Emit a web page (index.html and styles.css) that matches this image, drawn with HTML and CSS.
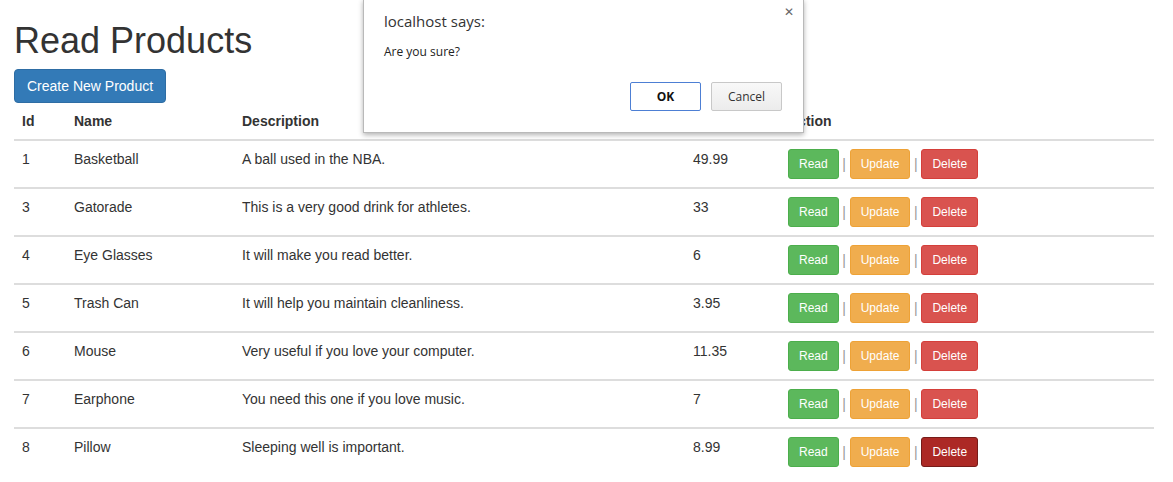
FILE: index.html
```html
<!DOCTYPE html>
<html>
<head>
<meta charset="utf-8">
<title>Read Products</title>
<link rel="stylesheet" href="styles.css">
</head>
<body>
<div class="container">
  <h1 class="title">Read Products</h1>
  <div class="toolbar"><a class="btn btn-primary">Create New Product</a></div>
  <table class="table">
    <colgroup>
      <col class="c-id"><col class="c-name"><col class="c-desc"><col class="c-price"><col class="c-action">
    </colgroup>
    <thead>
      <tr><th>Id</th><th>Name</th><th>Description</th><th>Price</th><th>Action</th></tr>
    </thead>
    <tbody>
      <tr><td>1</td><td>Basketball</td><td>A ball used in the NBA.</td><td>49.99</td><td class="actions"><a class="btn-sm green">Read</a><span class="sep">|</span><a class="btn-sm orange">Update</a><span class="sep">|</span><a class="btn-sm red">Delete</a></td></tr>
      <tr><td>3</td><td>Gatorade</td><td>This is a very good drink for athletes.</td><td>33</td><td class="actions"><a class="btn-sm green">Read</a><span class="sep">|</span><a class="btn-sm orange">Update</a><span class="sep">|</span><a class="btn-sm red">Delete</a></td></tr>
      <tr><td>4</td><td>Eye Glasses</td><td>It will make you read better.</td><td>6</td><td class="actions"><a class="btn-sm green">Read</a><span class="sep">|</span><a class="btn-sm orange">Update</a><span class="sep">|</span><a class="btn-sm red">Delete</a></td></tr>
      <tr><td>5</td><td>Trash Can</td><td>It will help you maintain cleanliness.</td><td>3.95</td><td class="actions"><a class="btn-sm green">Read</a><span class="sep">|</span><a class="btn-sm orange">Update</a><span class="sep">|</span><a class="btn-sm red">Delete</a></td></tr>
      <tr><td>6</td><td>Mouse</td><td>Very useful if you love your computer.</td><td>11.35</td><td class="actions"><a class="btn-sm green">Read</a><span class="sep">|</span><a class="btn-sm orange">Update</a><span class="sep">|</span><a class="btn-sm red">Delete</a></td></tr>
      <tr><td>7</td><td>Earphone</td><td>You need this one if you love music.</td><td>7</td><td class="actions"><a class="btn-sm green">Read</a><span class="sep">|</span><a class="btn-sm orange">Update</a><span class="sep">|</span><a class="btn-sm red">Delete</a></td></tr>
      <tr><td>8</td><td>Pillow</td><td>Sleeping well is important.</td><td>8.99</td><td class="actions"><a class="btn-sm green">Read</a><span class="sep">|</span><a class="btn-sm orange">Update</a><span class="sep">|</span><a class="btn-sm red active">Delete</a></td></tr>
    </tbody>
  </table>
</div>

<div class="dialog">
  <span class="close">&#x2715;</span>
  <div class="dlg-title">localhost says:</div>
  <div class="dlg-msg">Are you sure?</div>
  <div class="dlg-buttons">
    <button class="dlg-btn ok">OK</button>
    <button class="dlg-btn">Cancel</button>
  </div>
</div>
</body>
</html>
```

FILE: styles.css
```css
html, body {
  margin: 0;
  padding: 0;
  background: #fff;
}
body {
  font-family: "Liberation Sans", Arial, Helvetica, sans-serif;
  font-size: 14px;
  line-height: 20px;
  color: #333;
}
.container {
  padding: 0 19px 0 14px;
}
.title {
  font-size: 36px;
  font-weight: 500;
  line-height: 40px;
  margin: 21px 0 8px;
  color: #333;
}
.toolbar {
  height: 34px;
}
.btn {
  display: inline-block;
  box-sizing: border-box;
  height: 34px;
  padding: 6px 12px;
  font-size: 14px;
  line-height: 20px;
  border: 1px solid transparent;
  border-radius: 4px;
  cursor: pointer;
}
.btn-primary {
  background: #337ab7;
  border-color: #2e6da4;
  color: #fff;
}
.table {
  width: 1140px;
  border-collapse: collapse;
  table-layout: fixed;
}
.c-id { width: 52px; }
.c-name { width: 168px; }
.c-desc { width: 451px; }
.c-price { width: 95px; }
.c-action { width: 374px; }
.table th {
  text-align: left;
  font-weight: bold;
  padding: 8px;
  vertical-align: bottom;
  border-bottom: 2px solid #ddd;
}
.table td {
  padding: 8px 8px 8px;
  vertical-align: top;
  border-top: 2px solid #ddd;
  height: 30px;
}
.table thead + tbody tr:first-child td {
  border-top: 0;
}
.actions {
  white-space: nowrap;
}
.table td.actions {
  padding-top: 8px;
  padding-bottom: 8px;
}
.btn-sm {
  display: inline-block;
  box-sizing: border-box;
  height: 30px;
  padding: 5px 10px;
  font-size: 12px;
  line-height: 18px;
  border: 1px solid transparent;
  border-radius: 3px;
  color: #fff;
  vertical-align: top;
}
.green { background: #5cb85c; border-color: #4cae4c; }
.orange { background: #f0ad4e; border-color: #eea236; }
.red { background: #d9534f; border-color: #d43f3a; }
.red.active { background: #ac2925; border-color: #761c19; }
.sep {
  display: inline-block;
  width: 11px;
  text-align: center;
  color: #999;
  font-size: 14px;
  line-height: 30px;
  vertical-align: top;
}

.dialog {
  position: absolute;
  left: 363px;
  top: -1px;
  width: 441px;
  height: 134px;
  box-sizing: border-box;
  background: #fff;
  border: 1px solid #b9b9b9;
  box-shadow: 0 2px 5px rgba(0, 0, 0, 0.3);
  font-family: "Open Sans", "DejaVu Sans", sans-serif;
  color: #333;
  padding: 11px 20px 0 20px;
}
.close {
  position: absolute;
  right: 9px;
  top: 2px;
  font-size: 12px;
  color: #666;
  font-weight: bold;
}
.dlg-title {
  font-size: 15px;
  line-height: 20px;
  color: #333;
}
.dlg-msg {
  font-size: 12px;
  line-height: 16px;
  margin-top: 13px;
  color: #222;
}
.dlg-buttons {
  display: flex;
  justify-content: flex-end;
  gap: 10px;
  margin-top: 22px;
  padding-right: 1px;
}
.dlg-btn {
  width: 71px;
  height: 29px;
  box-sizing: border-box;
  background: linear-gradient(#f8f8f8, #ececec);
  border: 1px solid #c8c8c8;
  border-radius: 2px;
  font-family: "Open Sans", "DejaVu Sans", sans-serif;
  font-size: 12px;
  color: #333;
  padding: 0;
}
.dlg-btn.ok {
  background: #fff;
  border-color: #4d7fd4;
  font-weight: bold;
  color: #111;
}
```
